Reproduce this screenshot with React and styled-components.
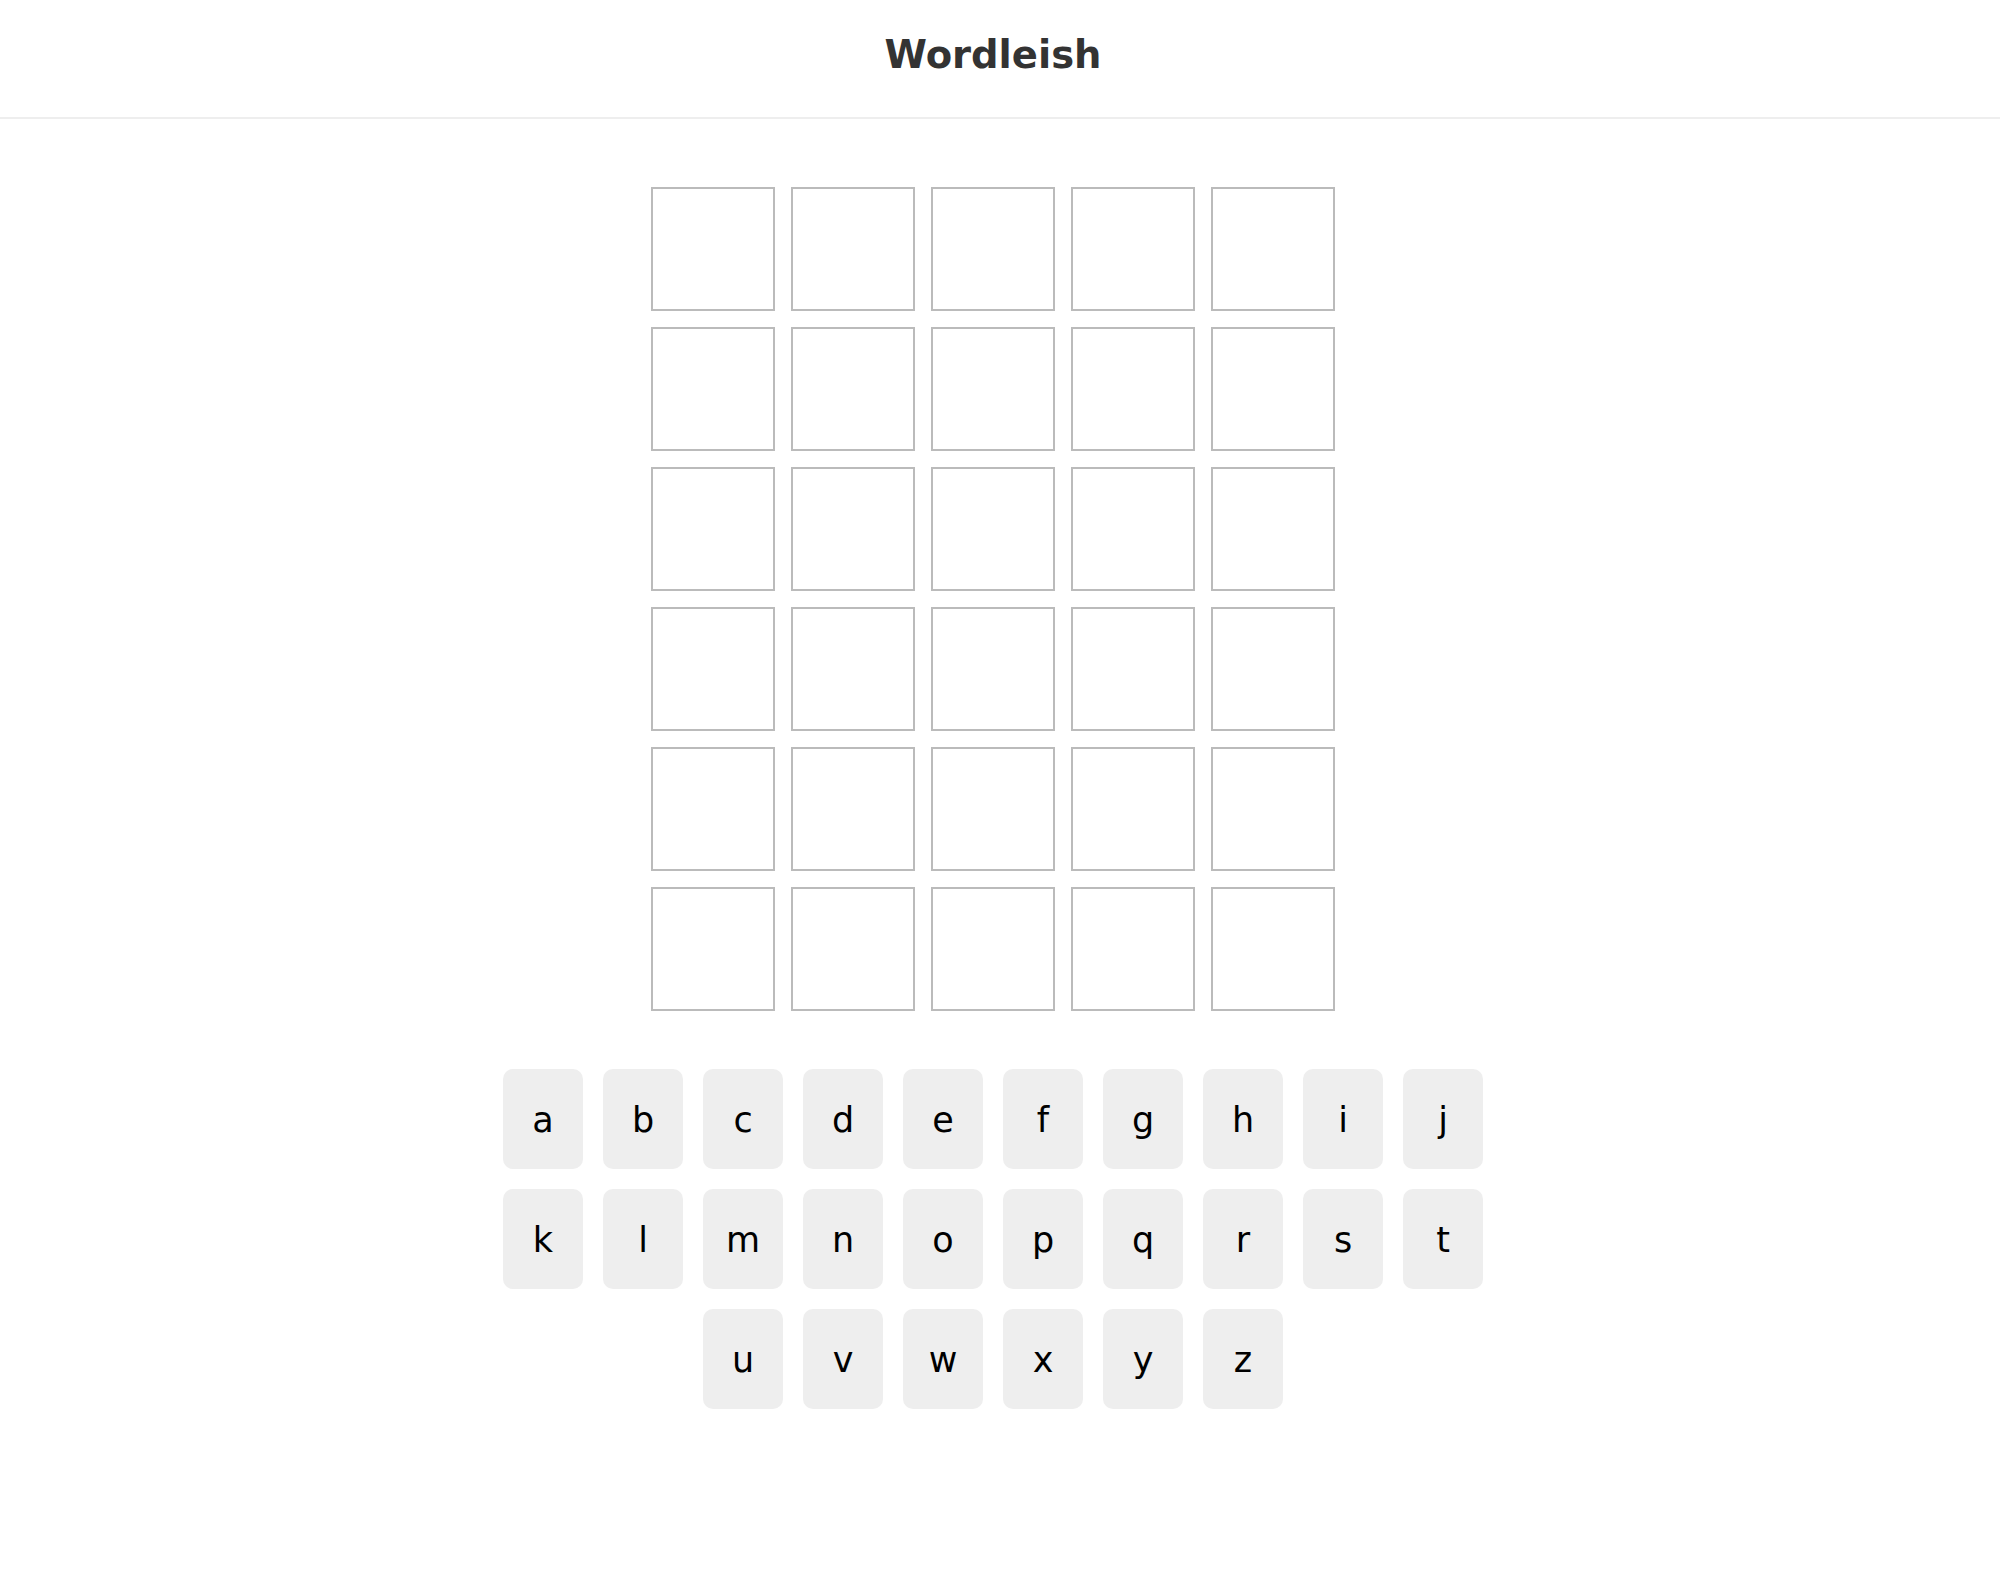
import React from 'react';
import styled, { createGlobalStyle } from 'styled-components';

const GlobalStyle = createGlobalStyle`
    * {
        box-sizing: border-box;
    }
    body {
        margin: 0;
        background: #fff;
        font-family: "DejaVu Sans", Verdana, sans-serif;
    }
`;

const Header = styled.header`
    width: 100%;
    padding: 33px 14px 41px 0;
    border-bottom: 2px solid #eee;
    display: flex;
    justify-content: center;
`;

const Title = styled.h1`
    margin: 0;
    font-size: 38.5px;
    line-height: 43px;
    font-weight: bold;
    color: #333;
`;

const Main = styled.main`
    display: flex;
    flex-direction: column;
    align-items: center;
    padding: 68px 14px 0 0;
    gap: 58px;
`;

const Board = styled.div`
    display: grid;
    grid-template-columns: repeat(5, 124px);
    grid-auto-rows: 124px;
    gap: 16px;
`;

const Tile = styled.div`
    border: 2px solid #bbb;
    background: #fff;
    display: flex;
    align-items: center;
    justify-content: center;
    font-size: 48px;
    font-weight: bold;
    text-transform: uppercase;
`;

const Keyboard = styled.div`
    display: flex;
    flex-direction: column;
    align-items: center;
    gap: 20px;
`;

const KeyRow = styled.div`
    display: flex;
    gap: 20px;
`;

const Key = styled.button`
    width: 80px;
    height: 100px;
    padding: 2px 0 0;
    border: none;
    border-radius: 10px;
    background: #eee;
    color: #000;
    font-family: "DejaVu Sans", Verdana, sans-serif;
    font-size: 35px;
    display: flex;
    align-items: center;
    justify-content: center;
    cursor: pointer;
`;

const rows = ['abcdefghij', 'klmnopqrst', 'uvwxyz'];

const App = () => {
    const board = Array.from({ length: 30 }, () => '');
    return (
        <>
            <GlobalStyle />
            <Header>
                <Title>Wordleish</Title>
            </Header>
            <Main>
                <Board>
                    {board.map((letter, index) => (
                        <Tile key={index}>{letter}</Tile>
                    ))}
                </Board>
                <Keyboard>
                    {rows.map(row => (
                        <KeyRow key={row}>
                            {row.split('').map(k => (
                                <Key key={k}>{k}</Key>
                            ))}
                        </KeyRow>
                    ))}
                </Keyboard>
            </Main>
        </>
    );
};

export default App;
